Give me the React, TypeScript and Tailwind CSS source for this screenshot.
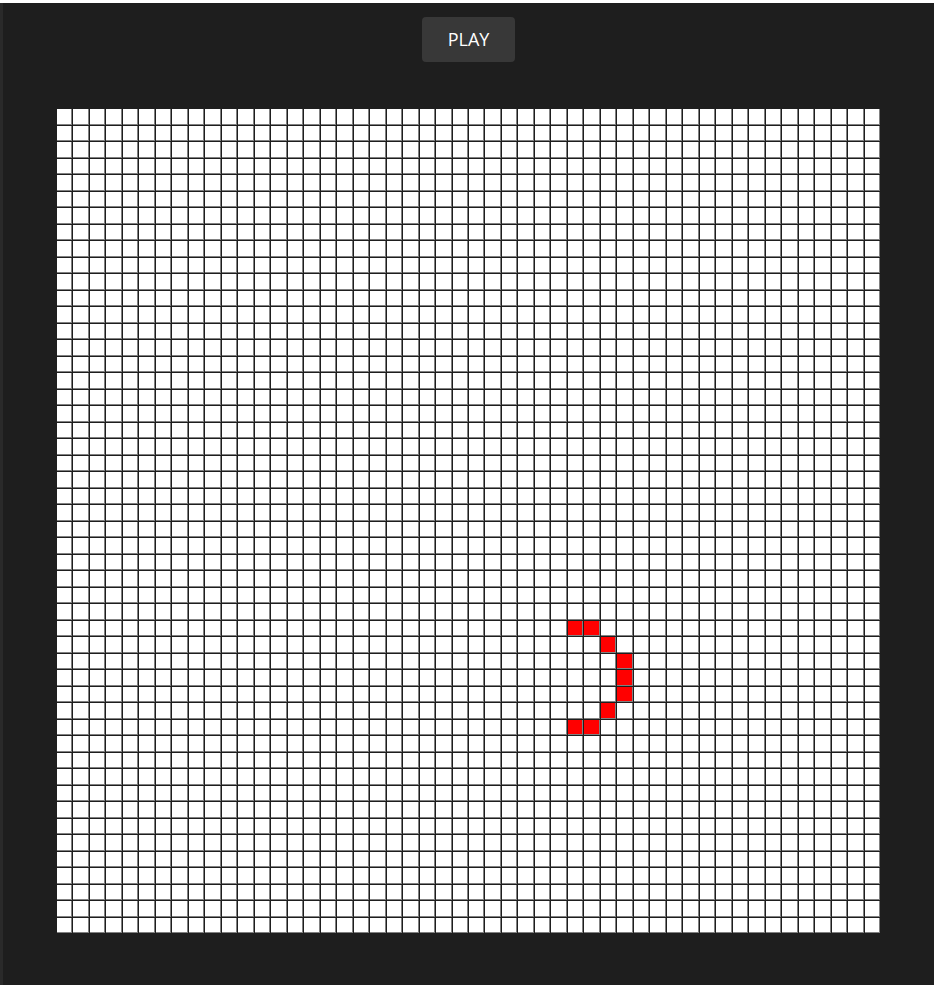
import React from 'react'

const ROWS = 50
const COLS = 50

// live cells of the current generation
const alive = new Set<string>([
  '31-31', '31-32',
  '32-33',
  '33-34', '34-34', '35-34',
  '36-33',
  '37-31', '37-32',
])

export default function App() {
  const cells = []
  for (let r = 0; r < ROWS; r++) {
    for (let c = 0; c < COLS; c++) {
      const on = alive.has(`${r}-${c}`)
      cells.push(
        <div
          key={`${r}-${c}`}
          className={`border-r border-b border-[#808080] ${on ? 'bg-[#ff0000]' : 'bg-white'}`}
        />
      )
    }
  }

  return (
    <div className="flex flex-col min-h-[985px] bg-[#1e1e1e]" style={{ fontFamily: '"Open Sans", "Noto Sans", sans-serif' }}>
      <div className="h-[3px] bg-white" />
      <div className="flex flex-1">
        <div className="w-[3px] bg-[#2a2a2a]" />
        <div className="flex flex-1 flex-col items-center">
          <button className="mt-[14px] h-[45px] w-[93px] rounded-[4px] bg-[#383838] text-[18px] text-white">
            PLAY
          </button>
          <div className="mt-[47px] grid h-[824px] w-[823px] grid-cols-[repeat(50,1fr)] grid-rows-[repeat(50,1fr)] gap-px">
            {cells}
          </div>
        </div>
      </div>
    </div>
  )
}
